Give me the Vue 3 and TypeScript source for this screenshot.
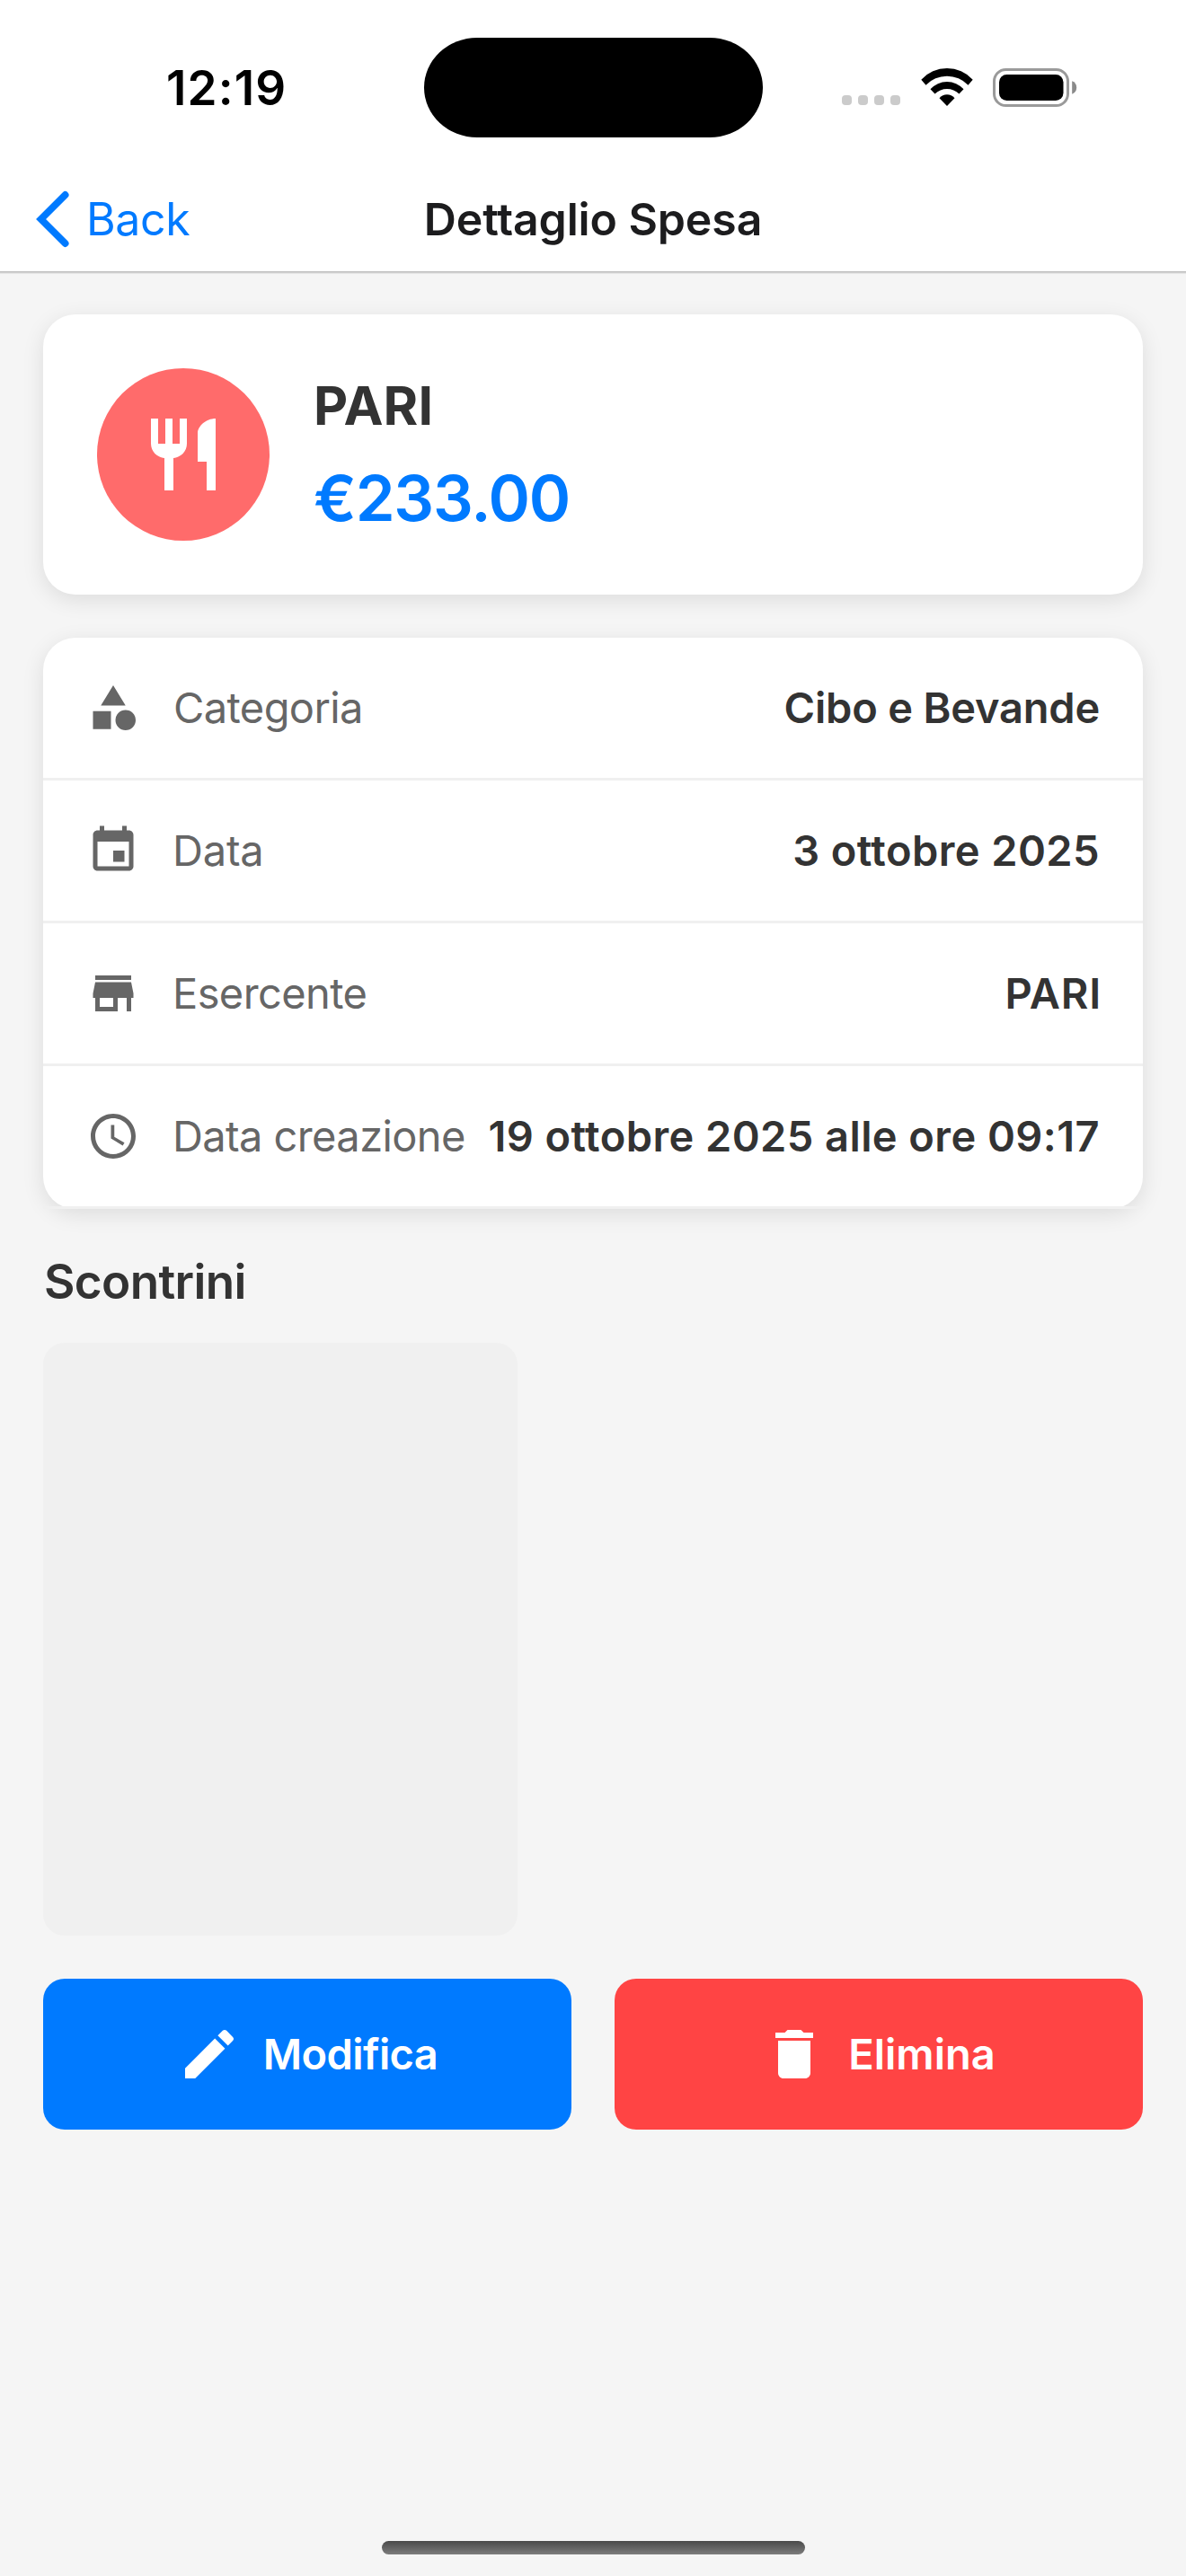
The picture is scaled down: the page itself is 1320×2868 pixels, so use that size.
<script setup lang="ts">
interface DetailRow {
  key: string
  label: string
  value: string
  icon: string
}

const rows: DetailRow[] = [
  {
    key: 'category',
    label: 'Categoria',
    value: 'Cibo e Bevande',
    icon: 'M12 2l-5.5 9h11L12 2zM17.5 13a4.5 4.5 0 1 0 0 9 4.5 4.5 0 0 0 0-9zM3 13.5h8v8H3v-8z',
  },
  {
    key: 'date',
    label: 'Data',
    value: '3 ottobre 2025',
    icon: 'M17 12h-5v5h5v-5zM16 1v2H8V1H6v2H5c-1.11 0-1.99.9-1.99 2L3 19c0 1.1.89 2 2 2h14c1.1 0 2-.9 2-2V5c0-1.1-.9-2-2-2h-1V1h-2zm3 18H5V8h14v11z',
  },
  {
    key: 'payee',
    label: 'Esercente',
    value: 'PARI',
    icon: 'M20 4H4v2h16V4zm1 10v-2l-1-5H4l-1 5v2h1v6h10v-6h4v6h2v-6h1zm-9 4H6v-4h6v4z',
  },
  {
    key: 'created',
    label: 'Data creazione',
    value: '19 ottobre 2025 alle ore 09:17',
    icon: 'M11.99 2C6.47 2 2 6.48 2 12s4.47 10 9.99 10C17.52 22 22 17.52 22 12S17.52 2 11.99 2zM12 20c-4.42 0-8-3.58-8-8s3.58-8 8-8 8 3.58 8 8-3.58 8-8 8zM12.5 7H11v6l5.25 3.15.75-1.23-4.5-2.67z',
  },
]
</script>

<template>
  <div class="screen">
    <header class="header">
      <div class="status-bar">
        <span class="clock">12:19</span>
        <div class="island"></div>
        <div class="indicators">
          <div class="cellular"><i></i><i></i><i></i><i></i></div>
          <svg class="wifi" width="58" height="42" viewBox="0 0 58 42">
            <path d="M.3 12.700A38.800 38.800 0 0 1 57.700 12.700L52.500 18.700A32.600 32.600 0 0 0 5.500 18.700Z" />
            <path d="M10.500 23.300A24.800 24.800 0 0 1 47.500 23.300L42.500 28.500A19.300 19.300 0 0 0 15.500 28.500Z" />
            <path d="M20.500 33.200A11 11 0 0 1 37.500 33.200L29 42Z" />
          </svg>
          <svg class="battery" width="94" height="43" viewBox="0 0 94 43">
            <rect x="1.5" y="1.5" width="82" height="40" rx="13" fill="none" stroke="#9a9a9a" stroke-width="3" />
            <rect x="7" y="7" width="71.500" height="29" rx="8.500" />
            <path d="M88.200 14.300C91.300 15.300 93.200 18.200 93.200 21.500S91.300 27.700 88.200 28.700Z" fill="#8a8a8a" />
          </svg>
        </div>
      </div>
      <nav class="nav-bar">
        <a class="back">
          <svg width="38" height="64" viewBox="0 0 38 64">
            <path d="M32.600 4.900L5.600 32L32.600 59.100" fill="none" stroke="#007aff" stroke-width="7.800" stroke-linecap="round" />
          </svg>
          <span>Back</span>
        </a>
        <h1 class="title">Dettaglio Spesa</h1>
      </nav>
    </header>

    <main class="content">
      <section class="card hero">
        <div class="hero-icon">
          <svg width="96" height="96" viewBox="0 0 24 24">
            <path d="M11 9H9V2H7v7H5V2H3v7c0 2.120 1.660 3.840 3.750 3.970V22h2.500v-9.030C11.340 12.840 13 11.120 13 9V2h-2v7zm5-3v8h2.500v8H21V2c-2.760 0-5 2.240-5 4z" />
          </svg>
        </div>
        <div class="hero-text">
          <div class="merchant">PARI</div>
          <div class="amount">€233.00</div>
        </div>
      </section>

      <section class="card details">
        <div v-for="row in rows" :key="row.key" class="row" :class="row.key">
          <svg class="row-icon" width="60" height="60" viewBox="0 0 24 24"><path :d="row.icon" /></svg>
          <span class="label">{{ row.label }}</span>
          <span class="value">{{ row.value }}</span>
        </div>
      </section>

      <h2 class="section-title">Scontrini</h2>
      <div class="receipt"></div>

      <div class="actions">
        <button class="action edit" type="button">
          <svg width="72" height="72" viewBox="0 0 24 24">
            <path d="M3 17.250V21h3.750L17.810 9.940l-3.750-3.750L3 17.250zM20.710 7.040c.39-.39.39-1.020 0-1.410l-2.340-2.340c-.39-.39-1.020-.39-1.410 0l-1.830 1.830 3.750 3.750 1.830-1.830z" />
          </svg>
          <span>Modifica</span>
        </button>
        <button class="action delete" type="button">
          <svg width="72" height="72" viewBox="0 0 24 24">
            <path d="M6 19c0 1.100.9 2 2 2h8c1.100 0 2-.9 2-2V7H6v12zM19 4h-3.500l-1-1h-5l-1 1H5v2h14V4z" />
          </svg>
          <span>Elimina</span>
        </button>
      </div>
    </main>

    <div class="home-indicator"></div>
  </div>
</template>

<style>
body {
  background: #f5f5f5;
}
</style>

<style scoped>
.screen {
  display: flex;
  flex-direction: column;
  box-sizing: border-box;
  width: 1320px;
  height: 2868px;
  padding-bottom: 24px;
  background: #f5f5f5;
  color: #333;
  font-family: Inter, "Liberation Sans", sans-serif;
}

svg {
  display: block;
  flex: none;
}

.header {
  background: #fff;
  border-bottom: 1px solid #bfbfbf;
  box-shadow: 0 1px 0 #d0d0d0, 0 2px 0 #e6e6e6;
}

.status-bar {
  display: grid;
  grid-template-columns: 471.5px 377px 1fr;
  align-items: center;
  box-sizing: border-box;
  height: 186px;
  padding-top: 8px;
}

.clock {
  padding: 2px 0 0 185px;
  color: #000;
  font-size: 53px;
  line-height: 64px;
  font-weight: 600;
  letter-spacing: 1.1px;
}

.island {
  height: 111px;
  border-radius: 59px / 55.5px;
  background: #000;
}

.indicators {
  display: flex;
  align-items: center;
  padding-left: 88.5px;
}

.cellular {
  display: flex;
  gap: 7px;
  margin: 29px 22.5px 0 0;
}

.cellular i {
  width: 11px;
  height: 11px;
  border-radius: 4px;
  background: #cbcbcb;
}

.wifi {
  margin-right: 22.5px;
}

.nav-bar {
  display: grid;
  grid-template-columns: 1fr auto 1fr;
  align-items: center;
  height: 116px;
}

.back {
  display: flex;
  align-items: center;
  padding-left: 40px;
  color: #007aff;
  font-size: 50px;
  line-height: 60px;
  letter-spacing: -0.35px;
}

.back span {
  margin-left: 18px;
}

.title {
  margin: 0;
  color: #1c1c1e;
  font-size: 50px;
  line-height: 60px;
  font-weight: 600;
  letter-spacing: -0.12px;
}

.content {
  padding: 47px 48px 0;
}

.card {
  border-radius: 36px;
  background: #fff;
  box-shadow: 0 6px 24px rgba(0, 0, 0, 0.1);
}

.hero {
  display: flex;
  align-items: center;
  gap: 48px;
  padding: 60px;
  margin-bottom: 48px;
}

.hero-icon {
  display: grid;
  place-items: center;
  width: 192px;
  height: 192px;
  border-radius: 50%;
  background: #ff6b6b;
  fill: #fff;
}

.hero-text {
  padding-top: 2px;
}

.merchant {
  margin-bottom: 24px;
  padding-left: 1px;
  font-size: 59px;
  line-height: 72px;
  font-weight: 700;
  letter-spacing: 0.1px;
}

.amount {
  padding-left: 1px;
  color: #007aff;
  font-size: 70.5px;
  line-height: 86px;
  font-weight: 600;
  letter-spacing: -1.2px;
}

.row {
  display: flex;
  align-items: center;
  height: 156px;
  padding: 0 48px;
  border-bottom: 3px solid #f0f0f0;
  font-size: 47px;
  line-height: 58px;
  white-space: nowrap;
}

.row-icon {
  margin-right: 36px;
  fill: #666;
}

.label {
  color: #666;
  letter-spacing: -0.6px;
}

.value {
  margin-left: auto;
  font-weight: 600;
  letter-spacing: 0.42px;
}

.category .label {
  padding-left: 1px;
}

.category .value {
  letter-spacing: -0.2px;
}

.date .label {
  letter-spacing: -0.2px;
}

.payee .value {
  margin-right: -2px;
  letter-spacing: 0.8px;
}

.section-title {
  margin: 49px 0 36px 1px;
  font-size: 53px;
  line-height: 64px;
  font-weight: 600;
  letter-spacing: -0.63px;
}

.receipt {
  width: 528px;
  height: 660px;
  margin-bottom: 48px;
  border-radius: 24px;
  background: #f0f0f0;
}

.actions {
  display: grid;
  grid-template-columns: 1fr 1fr;
  gap: 48px;
}

.action {
  display: flex;
  align-items: center;
  justify-content: center;
  gap: 24px;
  height: 168px;
  padding: 0;
  border: 0;
  border-radius: 24px;
  color: #fff;
  fill: #fff;
  font: 600 47px/58px Inter, "Liberation Sans", sans-serif;
}

.edit {
  background: #007aff;
  letter-spacing: -0.6px;
}

.delete {
  background: #ff4444;
}

.home-indicator {
  width: 471px;
  height: 15px;
  margin: auto auto 0;
  border-radius: 8px;
  background: linear-gradient(#4a4a4a, #7c7c7c);
}
</style>
